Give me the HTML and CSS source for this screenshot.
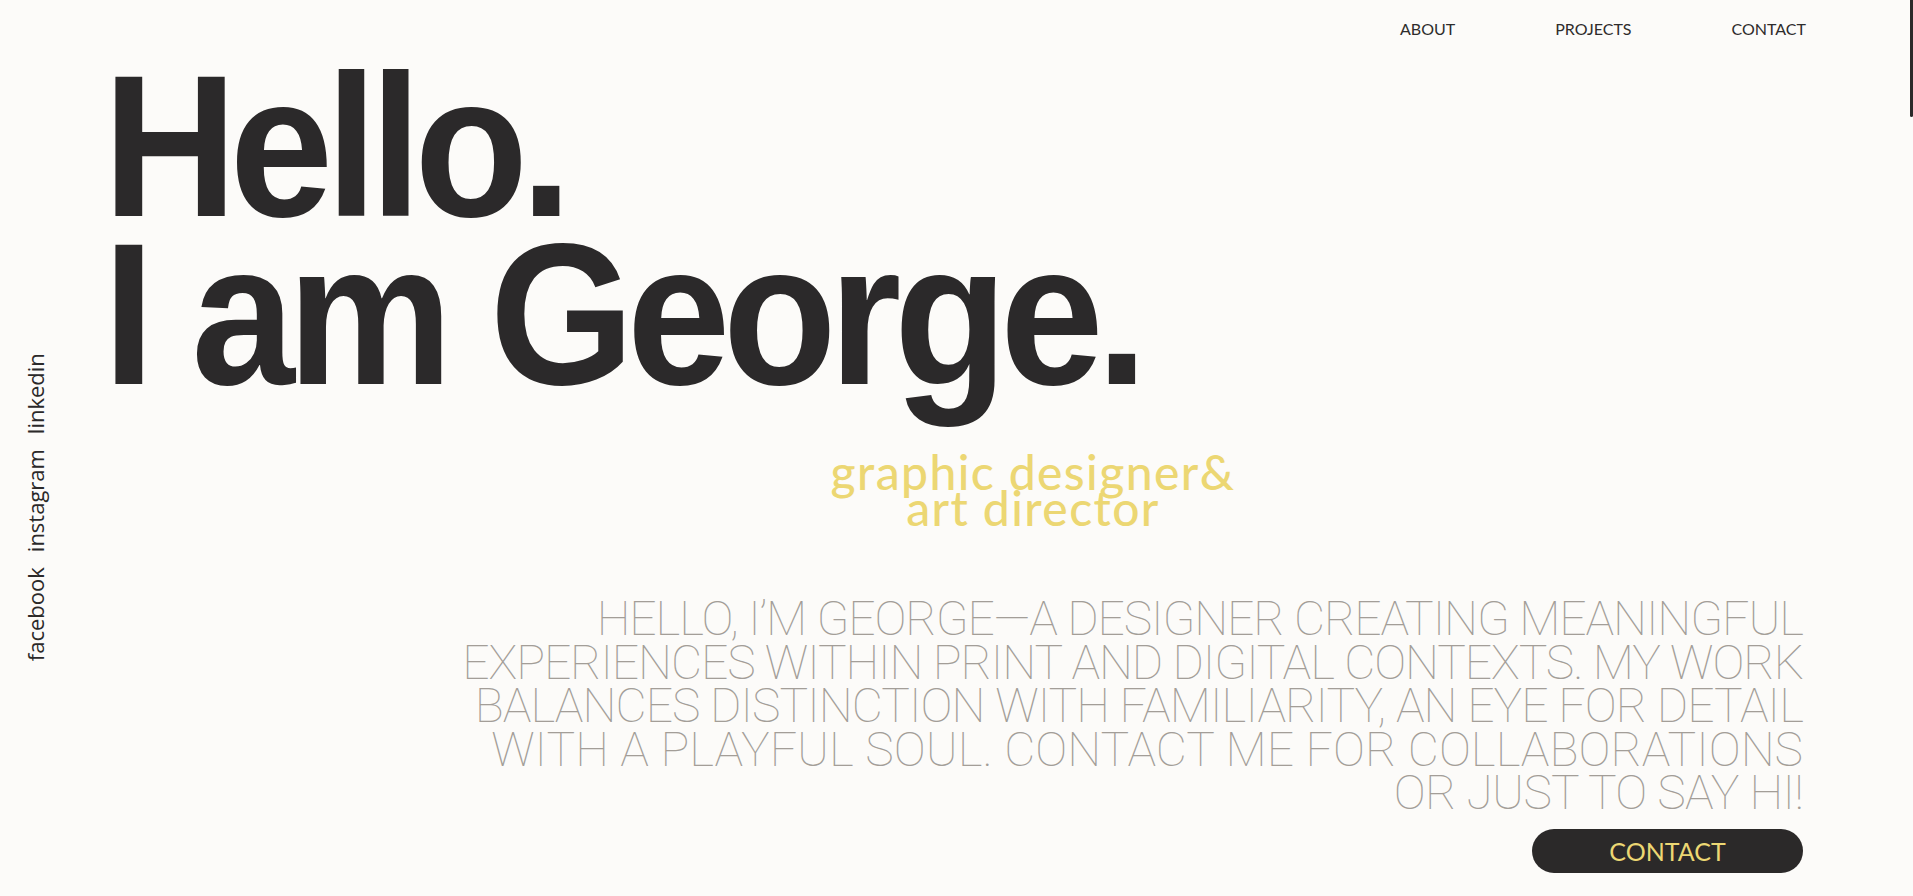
FILE: index.html
```html
<!DOCTYPE html>
<html lang="en">
<head>
<meta charset="utf-8">
<title>George — graphic designer &amp; art director</title>
<link rel="stylesheet" href="styles.css">
</head>
<body>
<div class="page">
  <aside class="side">
    <nav class="social">
      <a href="#">facebook</a>
      <a href="#">instagram</a>
      <a href="#">linkedin</a>
    </nav>
  </aside>
  <main class="main">
    <header class="topnav">
      <a href="#">ABOUT</a>
      <a href="#">PROJECTS</a>
      <a href="#">CONTACT</a>
    </header>
    <h1 class="hero">Hello.<br>I am George.</h1>
    <p class="role">graphic designer&amp;<br>art director</p>
    <p class="intro"><span class="line">HELLO, I’M GEORGE—A DESIGNER CREATING MEANINGFUL</span><br><span class="line">EXPERIENCES WITHIN PRINT AND DIGITAL CONTEXTS. MY WORK</span><br><span class="line line-3">BALANCES DISTINCTION WITH FAMILIARITY, AN EYE FOR DETAIL</span><br><span class="line line-4">WITH A PLAYFUL SOUL. CONTACT ME FOR COLLABORATIONS</span><br><span class="line line-5">OR JUST TO SAY HI!</span></p>
    <div class="cta-row">
      <a class="cta" href="#">CONTACT</a>
    </div>
  </main>
</div>
<div class="scroll-thumb"></div>
</body>
</html>
```
FILE: styles.css
```css
* { box-sizing: border-box; }
html, body { margin: 0; padding: 0; }
body {
  background: #fcfbf9;
  color: #2b2929;
  font-family: Lato, "Open Sans", sans-serif;
  overflow: hidden;
}
a { color: inherit; text-decoration: none; }

.page {
  display: flex;
  width: 1913px;
  height: 896px;
}

.side {
  flex: none;
  width: 72px;
  display: flex;
  align-items: flex-start;
  padding-left: 24px;
  padding-top: 353px;
}
.social {
  writing-mode: vertical-rl;
  transform: rotate(180deg);
  display: flex;
  gap: 15px;
  font-family: "Open Sans", sans-serif;
  font-size: 22px;
  line-height: 22px;
  color: #2b2929;
}

.main {
  flex: 1;
  padding-left: 31px;
  padding-right: 110px;
  display: flex;
  flex-direction: column;
}

.topnav {
  display: flex;
  justify-content: flex-end;
  gap: 100px;
  margin-right: -3px;
  padding-top: 19px;
  font-size: 16px;
  line-height: 20px;
  color: #2e2c2c;
}

.hero {
  margin: 23px 0 0;
  font-family: "Liberation Sans", Arial, sans-serif;
  font-weight: 700;
  font-size: 202px;
  line-height: 168px;
  letter-spacing: -8px;
  color: #2b292a;
  transform: scaleX(0.92);
  transform-origin: left top;
}

.role {
  margin: 56px 0 0 680px;
  width: 500px;
  text-align: center;
  font-family: Lato, sans-serif;
  font-weight: 500;
  font-size: 48px;
  line-height: 36px;
  letter-spacing: 1.4px;
  color: #ecd773;
}

.intro {
  margin: 71px 0 0;
  text-align: right;
  font-family: Roboto, sans-serif;
  font-weight: 100;
  font-size: 48px;
  line-height: 43.5px;
  letter-spacing: -1.1px;
  color: #a39e98;
}
.intro .line-3 { letter-spacing: -0.95px; }
.intro .line-4 { letter-spacing: 0; }
.intro .line-5 { letter-spacing: -0.7px; }

.cta-row {
  display: flex;
  justify-content: flex-end;
  margin-top: 14px;
}
.cta {
  width: 271px;
  height: 44px;
  border-radius: 22px;
  background: #2b2929;
  color: #ecd773;
  display: flex;
  align-items: center;
  justify-content: center;
  font-size: 25px;
}

.scroll-thumb {
  position: fixed;
  top: 0;
  right: 0;
  width: 3px;
  height: 117px;
  background: #2b2929;
  border-radius: 0 0 2px 2px;
}
```
